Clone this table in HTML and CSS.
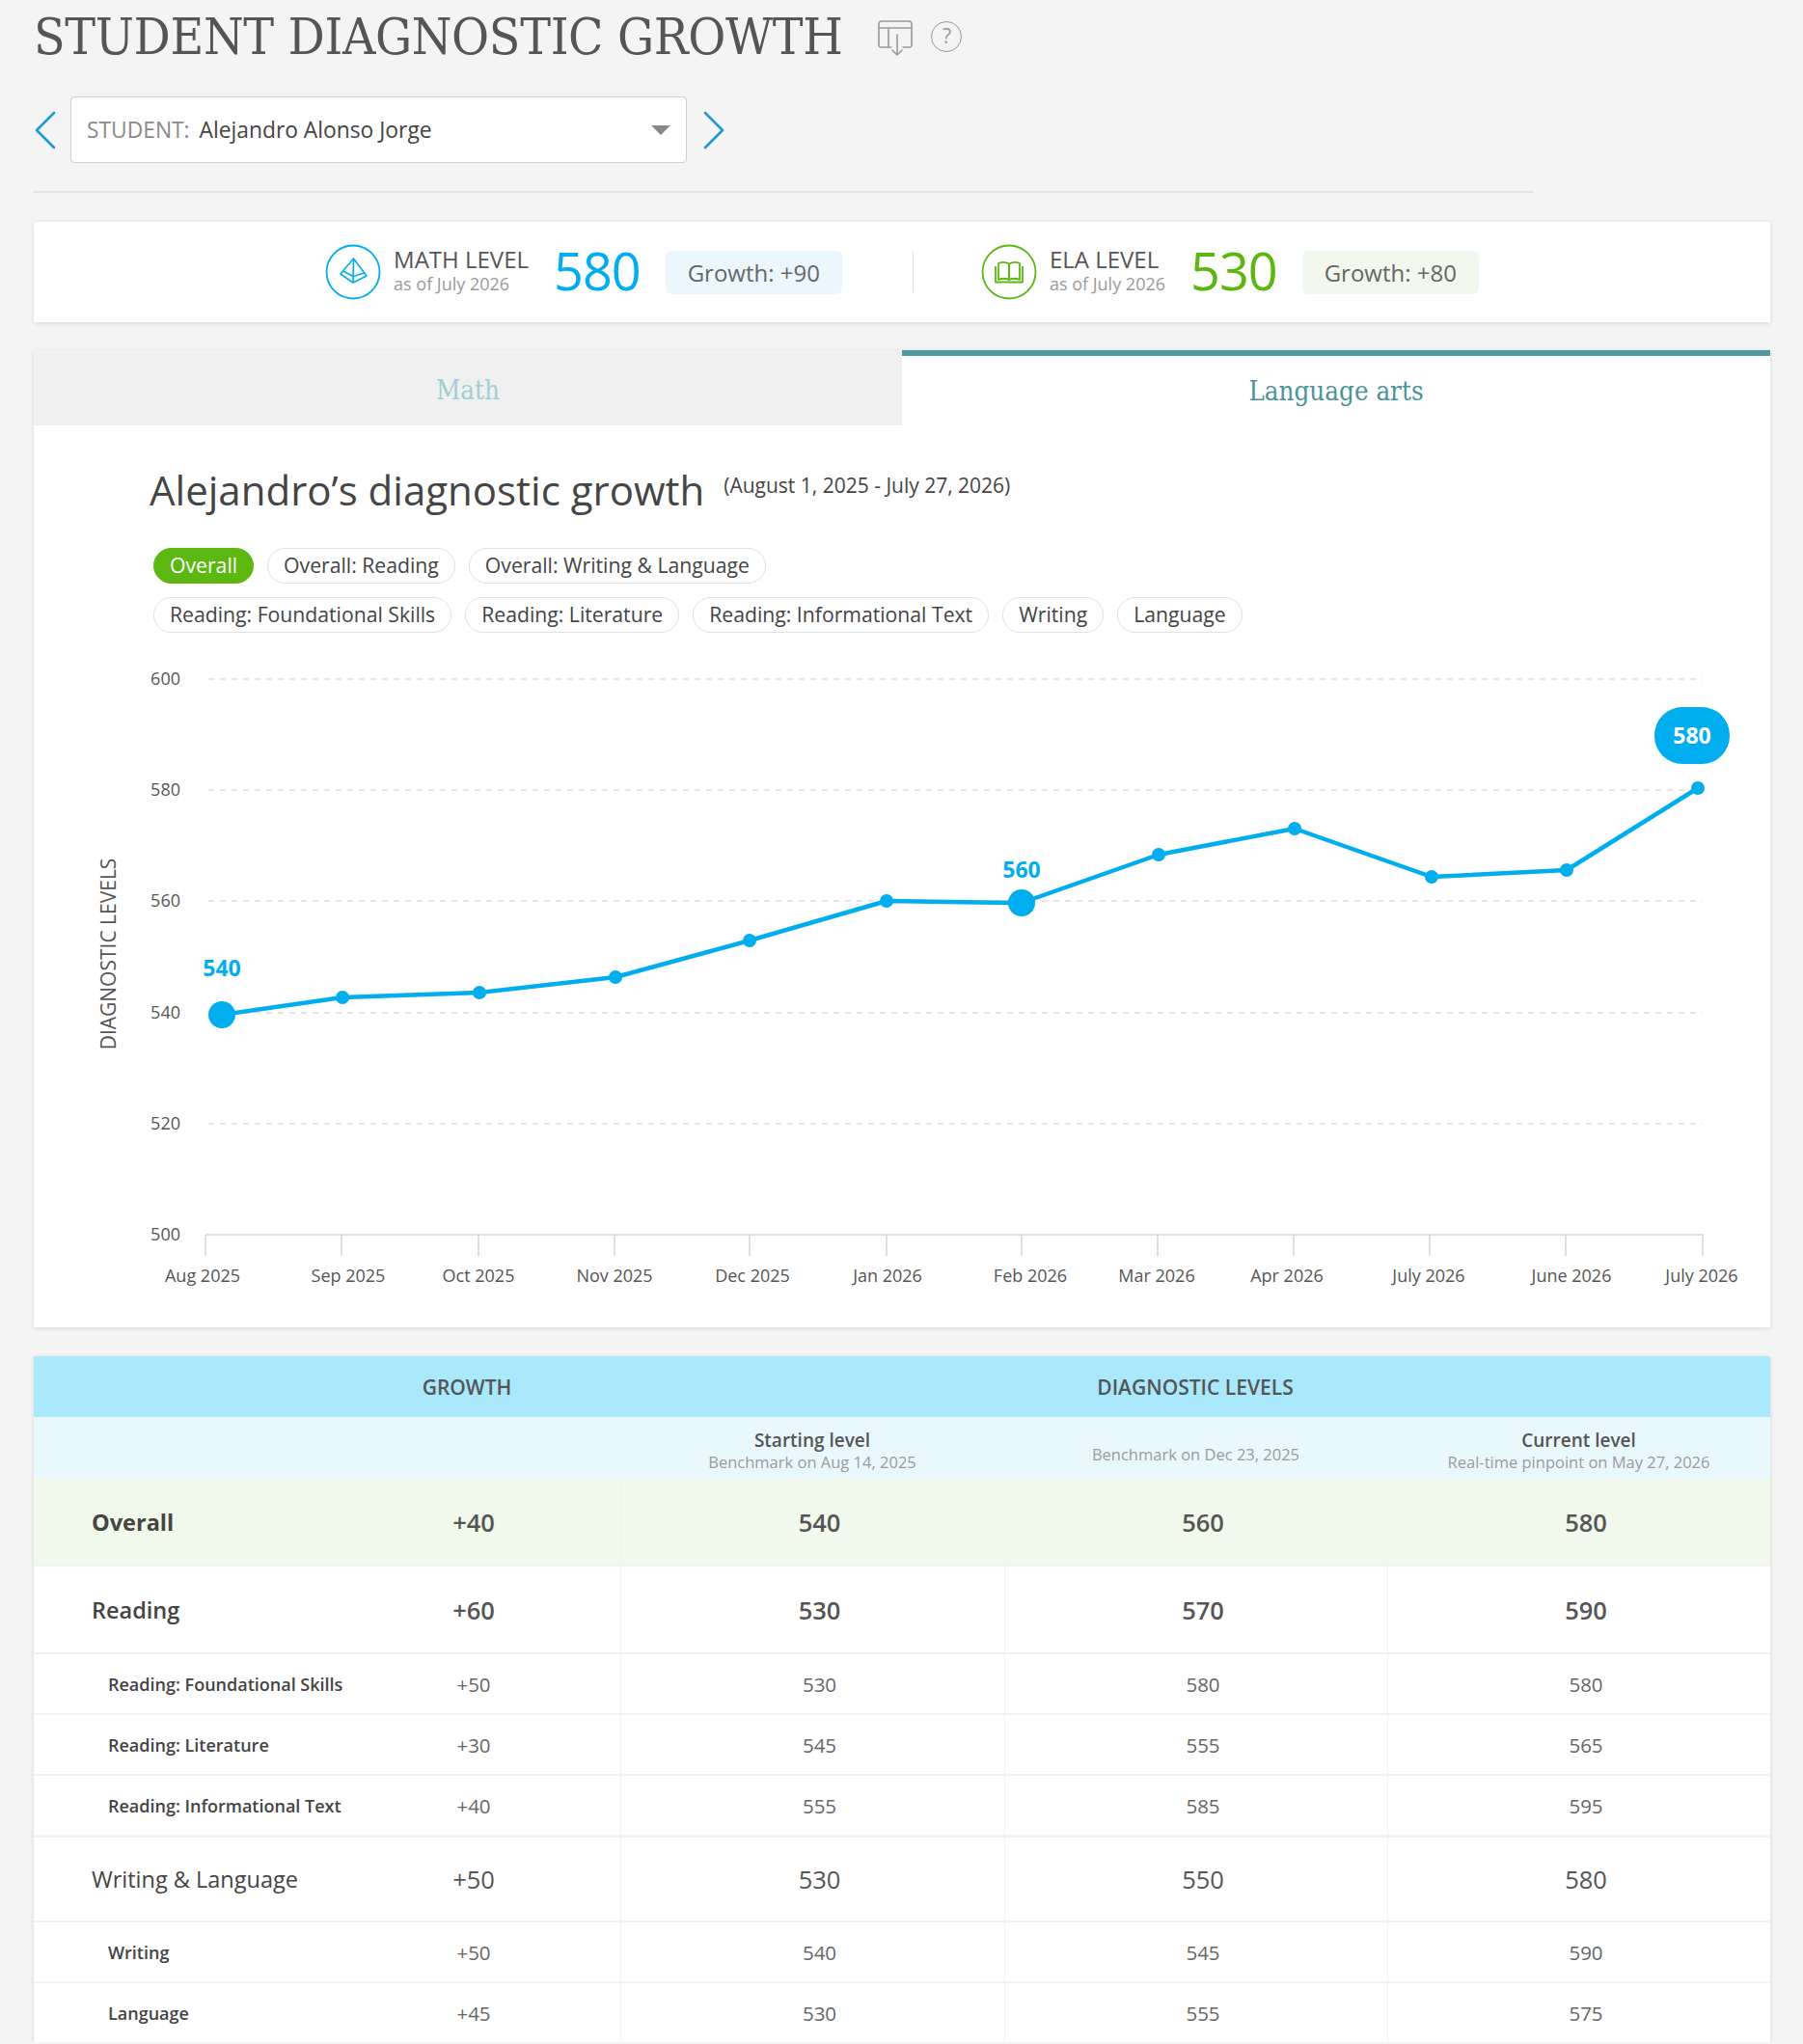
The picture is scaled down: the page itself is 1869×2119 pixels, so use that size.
FILE: index.html
```html
<!DOCTYPE html>
<html lang="en">
<head>
<meta charset="utf-8">
<title>Student Diagnostic Growth</title>
<link rel="stylesheet" href="styles.css">
</head>
<body>
<div class="page">
  <header class="title-row">
    <h1 class="title">STUDENT DIAGNOSTIC GROWTH</h1>
    <svg class="ico-table" width="36" height="38" viewBox="0 0 36 38" aria-hidden="true">
      <path d="M14 28 H3.5 a2.5 2.5 0 0 1 -2.5 -2.5 V3.5 a2.5 2.5 0 0 1 2.5 -2.5 H32.5 a2.5 2.5 0 0 1 2.5 2.5 V25.5 a2.5 2.5 0 0 1 -2.5 2.5 H26"/>
      <path d="M1 8 H35 M11 8 V28 M20 15 V36 M15 31 L20 36 L25 31"/>
    </svg>
    <span class="ico-help">?</span>
  </header>

  <div class="student-row">
    <svg class="chev" width="24" height="40" viewBox="0 0 24 40" aria-hidden="true"><polyline points="21,2 3,20 21,38"/></svg>
    <div class="select">
      <span class="select-label">STUDENT:</span>
      <span class="select-value">Alejandro Alonso Jorge</span>
      <span class="caret"></span>
    </div>
    <svg class="chev" width="24" height="40" viewBox="0 0 24 40" aria-hidden="true"><polyline points="3,2 21,20 3,38"/></svg>
  </div>

  <div class="sep"></div>

  <section class="levels card">
    <div class="level">
      <svg class="lvl-icon" width="58" height="58" viewBox="0 0 58 58" aria-hidden="true">
        <circle cx="29" cy="29" r="27.5" fill="none" stroke="#00aeef" stroke-width="1.8"/>
        <g fill="none" stroke="#00aeef" stroke-width="1.6" stroke-linejoin="round">
          <path d="M29.5 15 L16 31 L29 40 L43 33 Z"/>
          <path d="M29.5 15 L29 40"/>
          <path d="M18.5 28 L29.2 33.5 L40.5 30"/>
        </g>
      </svg>
      <div class="lvl-text">
        <div class="lvl-name">MATH LEVEL</div>
        <div class="lvl-date">as of July 2026</div>
      </div>
      <div class="lvl-score math">580</div>
      <div class="growth math">Growth: +90</div>
    </div>
    <div class="vdiv"></div>
    <div class="level">
      <svg class="lvl-icon" width="58" height="58" viewBox="0 0 58 58" aria-hidden="true">
        <circle cx="29" cy="29" r="27.5" fill="none" stroke="#5cb811" stroke-width="1.8"/>
        <g fill="none" stroke="#5cb811" stroke-width="1.8" stroke-linejoin="round">
          <path d="M18 20 Q23.5 17.5 29 20.5 V37 Q23.5 34.5 18 37 Z"/>
          <path d="M40 20 Q34.5 17.5 29 20.5 V37 Q34.5 34.5 40 37 Z"/>
          <path d="M15 23 V39.5 H43 V23"/>
        </g>
      </svg>
      <div class="lvl-text">
        <div class="lvl-name">ELA LEVEL</div>
        <div class="lvl-date">as of July 2026</div>
      </div>
      <div class="lvl-score ela">530</div>
      <div class="growth ela">Growth: +80</div>
    </div>
  </section>

  <section class="panel card">
    <div class="tabs">
      <div class="tab">Math</div>
      <div class="tab active">Language arts</div>
    </div>
    <div class="chart-body">
      <div class="chart-head">
        <div class="chart-title-row">
          <h2 class="chart-title">Alejandro’s diagnostic growth</h2>
          <span class="chart-range">(August 1, 2025 - July 27, 2026)</span>
        </div>
        <div class="pills">
          <span class="pill on">Overall</span>
          <span class="pill">Overall: Reading</span>
          <span class="pill">Overall: Writing &amp; Language</span>
        </div>
        <div class="pills">
          <span class="pill">Reading: Foundational Skills</span>
          <span class="pill">Reading: Literature</span>
          <span class="pill">Reading: Informational Text</span>
          <span class="pill">Writing</span>
          <span class="pill">Language</span>
        </div>
      </div>
      <svg class="chart" width="1800" height="698" viewBox="0 0 1800 698">
        <g class="grid">
          <line x1="181" y1="26" x2="1730" y2="26"/>
          <line x1="181" y1="141" x2="1730" y2="141"/>
          <line x1="181" y1="256" x2="1730" y2="256"/>
          <line x1="181" y1="372" x2="1730" y2="372"/>
          <line x1="181" y1="487" x2="1730" y2="487"/>
        </g>
        <g class="axis">
          <line x1="178" y1="602" x2="1731" y2="602"/>
          <line x1="178" y1="602" x2="178" y2="624"/>
          <line x1="319" y1="602" x2="319" y2="624"/>
          <line x1="461" y1="602" x2="461" y2="624"/>
          <line x1="602" y1="602" x2="602" y2="624"/>
          <line x1="742" y1="602" x2="742" y2="624"/>
          <line x1="884" y1="602" x2="884" y2="624"/>
          <line x1="1024" y1="602" x2="1024" y2="624"/>
          <line x1="1165" y1="602" x2="1165" y2="624"/>
          <line x1="1306" y1="602" x2="1306" y2="624"/>
          <line x1="1447" y1="602" x2="1447" y2="624"/>
          <line x1="1588" y1="602" x2="1588" y2="624"/>
          <line x1="1730" y1="602" x2="1730" y2="624"/>
        </g>
        <g class="ylab">
          <text x="152" y="32">600</text>
          <text x="152" y="147">580</text>
          <text x="152" y="262">560</text>
          <text x="152" y="378">540</text>
          <text x="152" y="493">520</text>
          <text x="152" y="608">500</text>
        </g>
        <g class="xlab">
          <text x="175" y="651">Aug 2025</text>
          <text x="326" y="651">Sep 2025</text>
          <text x="461" y="651">Oct 2025</text>
          <text x="602" y="651">Nov 2025</text>
          <text x="745" y="651">Dec 2025</text>
          <text x="885" y="651">Jan 2026</text>
          <text x="1033" y="651">Feb 2026</text>
          <text x="1164" y="651">Mar 2026</text>
          <text x="1299" y="651">Apr 2026</text>
          <text x="1446" y="651">July 2026</text>
          <text x="1594" y="651">June 2026</text>
          <text x="1729" y="651">July 2026</text>
        </g>
        <text class="ytitle" x="0" y="0" transform="translate(85 311) rotate(-90)">DIAGNOSTIC LEVELS</text>
        <polyline class="line" points="195,374 320,356 462,351 603,335 742,297 884,256 1024,258 1166,208 1307,181 1449,231 1589,224 1725,139"/>
        <g class="dots">
          <circle cx="195" cy="374" r="14"/>
          <circle cx="320" cy="356" r="7"/>
          <circle cx="462" cy="351" r="7"/>
          <circle cx="603" cy="335" r="7"/>
          <circle cx="742" cy="297" r="7"/>
          <circle cx="884" cy="256" r="7"/>
          <circle cx="1024" cy="258" r="14"/>
          <circle cx="1166" cy="208" r="7"/>
          <circle cx="1307" cy="181" r="7"/>
          <circle cx="1449" cy="231" r="7"/>
          <circle cx="1589" cy="224" r="7"/>
          <circle cx="1725" cy="139" r="7"/>
        </g>
        <text class="ptlab" x="195" y="334">540</text>
        <text class="ptlab" x="1024" y="232">560</text>
        <rect class="bubble" x="1680" y="55" width="78" height="59" rx="29"/>
        <text class="bubble-text" x="1719" y="93">580</text>
      </svg>
    </div>
  </section>

  <section class="table card">
    <div class="trow h1">
      <div class="c c1"></div>
      <div class="c c2">GROWTH</div>
      <div class="c c345">DIAGNOSTIC LEVELS</div>
    </div>
    <div class="trow h2">
      <div class="c c1"></div>
      <div class="c c2"></div>
      <div class="c c3"><div class="sh">Starting level</div><div class="ss">Benchmark on Aug 14, 2025</div></div>
      <div class="c c4"><div class="ss only">Benchmark on Dec 23, 2025</div></div>
      <div class="c c5"><div class="sh">Current level</div><div class="ss">Real-time pinpoint on May 27, 2026</div></div>
    </div>
    <div class="trow major overall">
      <div class="c c1 lab">Overall</div>
      <div class="c c2">+40</div>
      <div class="c c3">540</div>
      <div class="c c4">560</div>
      <div class="c c5">580</div>
    </div>
    <div class="trow major reading">
      <div class="c c1 lab">Reading</div>
      <div class="c c2">+60</div>
      <div class="c c3">530</div>
      <div class="c c4">570</div>
      <div class="c c5">590</div>
    </div>
    <div class="trow sub">
      <div class="c c1 lab">Reading: Foundational Skills</div>
      <div class="c c2">+50</div>
      <div class="c c3">530</div>
      <div class="c c4">580</div>
      <div class="c c5">580</div>
    </div>
    <div class="trow sub">
      <div class="c c1 lab">Reading: Literature</div>
      <div class="c c2">+30</div>
      <div class="c c3">545</div>
      <div class="c c4">555</div>
      <div class="c c5">565</div>
    </div>
    <div class="trow sub">
      <div class="c c1 lab">Reading: Informational Text</div>
      <div class="c c2">+40</div>
      <div class="c c3">555</div>
      <div class="c c4">585</div>
      <div class="c c5">595</div>
    </div>
    <div class="trow major wl">
      <div class="c c1 lab">Writing &amp; Language</div>
      <div class="c c2">+50</div>
      <div class="c c3">530</div>
      <div class="c c4">550</div>
      <div class="c c5">580</div>
    </div>
    <div class="trow sub">
      <div class="c c1 lab">Writing</div>
      <div class="c c2">+50</div>
      <div class="c c3">540</div>
      <div class="c c4">545</div>
      <div class="c c5">590</div>
    </div>
    <div class="trow sub">
      <div class="c c1 lab">Language</div>
      <div class="c c2">+45</div>
      <div class="c c3">530</div>
      <div class="c c4">555</div>
      <div class="c c5">575</div>
    </div>
  </section>
</div>
</body>
</html>
```

FILE: styles.css
```css
* { box-sizing: border-box; }
html, body { margin: 0; padding: 0; }
body {
  background: #f4f4f4;
  font-family: "Open Sans", "Liberation Sans", sans-serif;
  color: #444;
}
.page {
  width: 1869px;
  padding: 6px 34px 0 35px;
}

/* title */
.title-row {
  display: flex;
  align-items: center;
  height: 64px;
}
.title {
  margin: 0;
  font-family: "DejaVu Serif Condensed", "DejaVu Serif", serif;
  font-stretch: condensed;
  font-weight: 300;
  font-size: 53px;
  line-height: 64px;
  color: #555;
  letter-spacing: -0.35px;
}
.ico-table {
  margin-left: 37px;
  margin-top: 4px;
  fill: none;
  stroke: #9a9a9a;
  stroke-width: 1.6;
  stroke-linecap: round;
  stroke-linejoin: round;
}
.ico-help {
  margin-left: 19px;
  width: 32px;
  height: 32px;
  border: 1.6px solid #9a9a9a;
  border-radius: 50%;
  color: #9a9a9a;
  font-size: 21px;
  line-height: 29px;
  text-align: center;
}

/* student select */
.student-row {
  display: flex;
  align-items: center;
  margin-top: 30px;
  height: 69px;
}
.chev {
  fill: none;
  stroke: #1e9bd7;
  stroke-width: 2.6;
  stroke-linecap: round;
  stroke-linejoin: round;
}
.student-row .chev:first-child { margin-right: 14px; }
.student-row .chev:last-child { margin-left: 16px; }
.select {
  width: 639px;
  height: 69px;
  background: #fff;
  border: 1.5px solid #cfcfcf;
  border-radius: 4px;
  display: flex;
  align-items: center;
  padding: 0 16px;
  font-size: 22.8px;
}
.select-label { color: #8a8a8a; margin-right: 10px; }
.select-value { color: #444; flex: 1; }
.caret {
  width: 0; height: 0;
  border-left: 10px solid transparent;
  border-right: 10px solid transparent;
  border-top: 10px solid #888;
}

.sep {
  width: 1554px;
  height: 2px;
  background: #e3e3e3;
  margin-top: 29px;
}

.card {
  background: #fff;
  box-shadow: 0 1px 5px rgba(0,0,0,0.12);
}

/* levels */
.levels {
  margin-top: 30px;
  height: 104px;
  display: flex;
  align-items: center;
  justify-content: center;
  padding-bottom: 4px;
}
.level {
  display: flex;
  align-items: center;
}
.lvl-icon { display: block; margin-top: 3px; }
.lvl-text { margin-left: 13px; }
.lvl-name { font-size: 24px; line-height: 28px; color: #555; }
.lvl-date { font-size: 18px; line-height: 22px; color: #9a9a9a; }
.lvl-score {
  font-size: 54px;
  line-height: 60px;
  margin-left: 26px;
  letter-spacing: -1px;
}
.lvl-score.math { color: #00aeef; }
.lvl-score.ela { color: #5cb811; }
.growth {
  margin-left: 26px;
  margin-top: 4px;
  height: 45px;
  padding: 0 23px;
  border-radius: 6px;
  font-size: 24px;
  line-height: 45px;
  color: #666;
}
.growth.math { background: #ecf7fd; }
.growth.ela { background: #f2f8ed; }
.vdiv {
  width: 1px;
  height: 42px;
  margin-top: 4px;
  background: #e0e0e0;
  margin-left: 73px;
  margin-right: 70px;
}

/* panel */
.panel { margin-top: 29px; }
.tabs { display: flex; height: 78px; }
.tab {
  flex: 1;
  display: flex;
  align-items: center;
  justify-content: center;
  background: #f0f0f0;
  padding-top: 4px;
  font-family: "DejaVu Serif Condensed", "DejaVu Serif", serif;
  font-stretch: condensed;
  font-size: 27.5px;
  color: #9fcfd3;
}
.tab.active {
  background: #fff;
  padding-top: 0;
  border-top: 6px solid #4f9a9e;
  color: #4a9499;
}
.chart-head { padding: 42px 0 0 120px; }
.chart-title-row { display: flex; align-items: flex-start; height: 49px; }
.chart-title {
  margin: 0;
  font-weight: 400;
  font-size: 42px;
  line-height: 49px;
  color: #454545;
}
.chart-range {
  margin-left: 20px;
  font-size: 21px;
  line-height: 40px;
  color: #444;
}
.pills {
  display: flex;
  gap: 14px;
  margin-left: 4px;
  margin-top: 36px;
}
.pills + .pills { margin-top: 14px; }
.pill {
  height: 37px;
  padding: 0 16px;
  border: 1.5px solid #e0e0e0;
  border-radius: 19px;
  font-size: 21.2px;
  line-height: 34px;
  color: #444;
  background: #fff;
}
.pill.on { background: #5cb811; border-color: #5cb811; color: #fff; }
.chart { display: block; margin-top: 22px; }
.grid line { stroke: #dedede; stroke-width: 1.5; stroke-dasharray: 6 6; }
.axis line { stroke: #d6d6d6; stroke-width: 1.5; }
.ylab text { font-family: "Open Sans", sans-serif; font-size: 18px; fill: #555; text-anchor: end; }
.xlab text { font-family: "Open Sans", sans-serif; font-size: 18px; fill: #555; text-anchor: middle; }
.ytitle { font-family: "Open Sans", sans-serif; font-size: 21px; fill: #555; text-anchor: middle; }
.line { fill: none; stroke: #00aeef; stroke-width: 4.5; stroke-linejoin: round; }
.dots circle { fill: #00aeef; }
.ptlab { font-family: "Open Sans", sans-serif; font-size: 23px; font-weight: 700; fill: #00aeef; text-anchor: middle; }
.bubble { fill: #00aeef; }
.bubble-text { font-family: "Open Sans", sans-serif; font-size: 23px; font-weight: 700; fill: #fff; text-anchor: middle; }

/* table */
.table { margin-top: 30px; }
.trow {
  display: grid;
  grid-template-columns: 310px 298px 398px 397px 397px;
}
.trow.h1 {
  grid-template-columns: 310px 298px 1192px;
  height: 63px;
  background: #aae8fc;
  align-items: center;
  font-size: 21px;
  font-weight: 600;
  color: #555;
}
.trow.h1 .c { text-align: center; }
.trow.h1 .c2 { padding-right: 20px; }
.trow.h2 {
  height: 64px;
  background: #e9f8fd;
  text-align: center;
}
.trow.h2 .c { display: flex; flex-direction: column; justify-content: center; padding-top: 5px; }
.sh { font-size: 19px; font-weight: 600; color: #555; line-height: 24px; }
.ss { font-size: 16.5px; color: #9b9b9b; line-height: 22px; }
.ss.only { padding-top: 8px; }
.trow.major, .trow.sub {
  border-top: 2px solid #f2f2f2;
  text-align: center;
  align-items: stretch;
}
.trow.major { height: 91px; font-size: 25.5px; color: #555; }
.trow.sub { height: 63px; font-size: 20.5px; color: #666; }
.trow.overall { border-top: 0; height: 89px; background: #f1f8ec; font-weight: 600; }
.trow.reading { font-weight: 600; }
.trow.wl { border-top-width: 3px; height: 89px; font-weight: 500; }
.trow .c { display: flex; align-items: center; justify-content: center; }
.trow.major .c3, .trow.major .c4, .trow.major .c5,
.trow.sub .c3, .trow.sub .c4, .trow.sub .c5 { border-left: 1px solid #f2f2f2; padding-left: 14px; }
.trow.major .c2, .trow.sub .c2 { padding-right: 6px; }
.trow .lab { justify-content: flex-start; white-space: nowrap; text-align: left; }
.trow.major .lab { padding-left: 60px; color: #444; font-size: 23.5px; }
.trow.overall .lab { font-weight: 700; }
.trow.reading .lab { font-weight: 600; }
.trow.wl .lab { font-weight: 400; }
.trow.sub .lab { padding-left: 77px; font-size: 18px; font-weight: 600; color: #444; }
```
